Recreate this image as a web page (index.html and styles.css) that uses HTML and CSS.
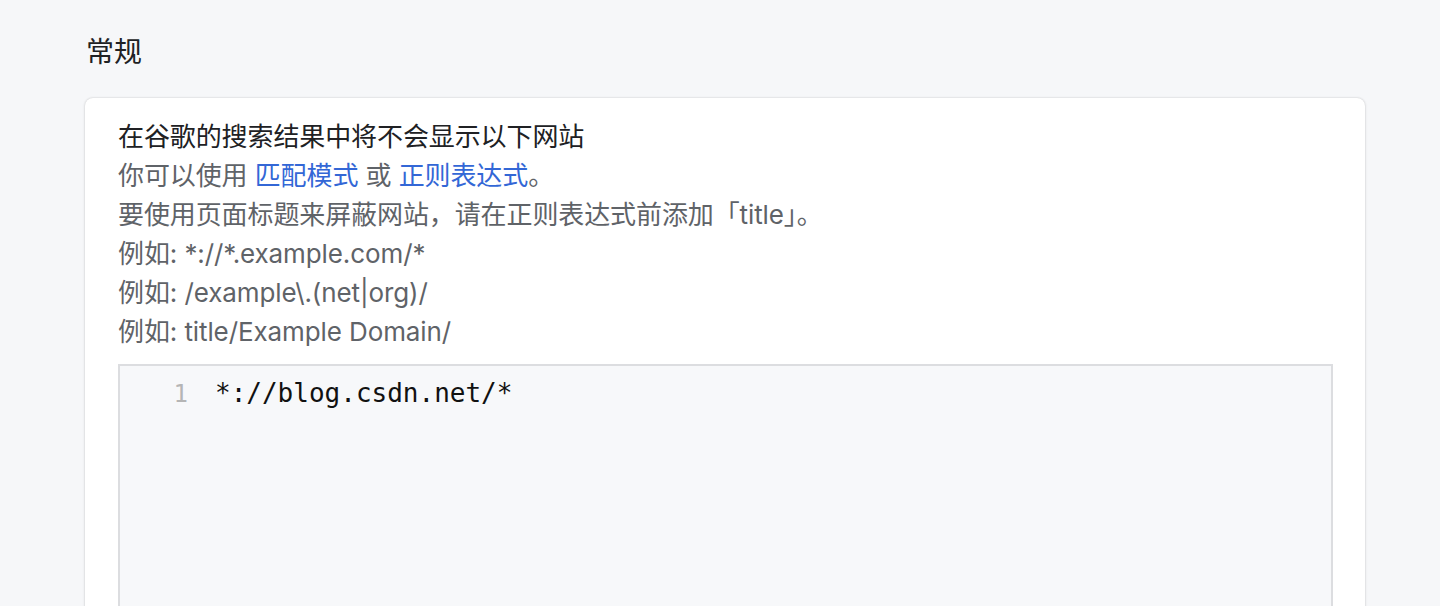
FILE: index.html
```html
<!DOCTYPE html>
<html lang="zh">
<head>
<meta charset="utf-8">
<link rel="stylesheet" href="styles.css">
</head>
<body>
<main class="page">
  <h2 class="section-title">常规</h2>
  <section class="card">
    <p class="line line-strong">在谷歌的搜索结果中将不会显示以下网站</p>
    <p class="line">你可以使用 <a class="link" href="#">匹配模式</a> 或 <a class="link" href="#">正则表达式</a>。</p>
    <p class="line">要使用页面标题来屏蔽网站，请在正则表达式前添加「title」。</p>
    <p class="line">例如: *://*.example.com/*</p>
    <p class="line">例如: /example\.(net|org)/</p>
    <p class="line">例如: title/Example Domain/</p>
    <div class="editor">
      <div class="editor-row">
        <span class="gutter">1</span>
        <span class="code">*://blog.csdn.net/*</span>
      </div>
    </div>
  </section>
</main>
</body>
</html>
```
FILE: styles.css
```css
html, body {
  margin: 0;
  padding: 0;
  background: #f6f7f9;
  height: 100%;
  overflow: hidden;
}
body {
  font-family: "Inter", "Noto Sans CJK SC", sans-serif;
}
.page {
  padding: 32px 75px 0 85px;
}
.section-title {
  margin: 0 0 0 1px;
  font-size: 28px;
  line-height: 40px;
  font-weight: 400;
  color: #202124;
}
.card {
  margin-top: 26px;
  background: #fff;
  border-radius: 8px;
  box-shadow: 0 0 2px rgba(0,0,0,0.2), 0 1px 4px rgba(0,0,0,0.06);
  padding: 19px 32px 0 33px;
  height: 600px;
}
.line {
  margin: 0;
  font-size: 26px;
  line-height: 39px;
  letter-spacing: -0.1px;
  color: #5f6368;
}
.line-strong {
  color: #202124;
}
.link {
  color: #3367d6;
  text-decoration: none;
}
.editor {
  margin-top: 13px;
  border: 2px solid #dcdde0;
  background: #f7f8fa;
  height: 400px;
  padding-top: 9px;
}
.editor-row {
  display: flex;
  align-items: baseline;
  font-family: "DejaVu Sans Mono", monospace;
}
.gutter {
  width: 68px;
  text-align: right;
  font-size: 24px;
  color: #b5b5b5;
  line-height: 36px;
}
.code {
  margin-left: 27px;
  font-size: 26px;
  line-height: 36px;
  color: #111;
}
```
